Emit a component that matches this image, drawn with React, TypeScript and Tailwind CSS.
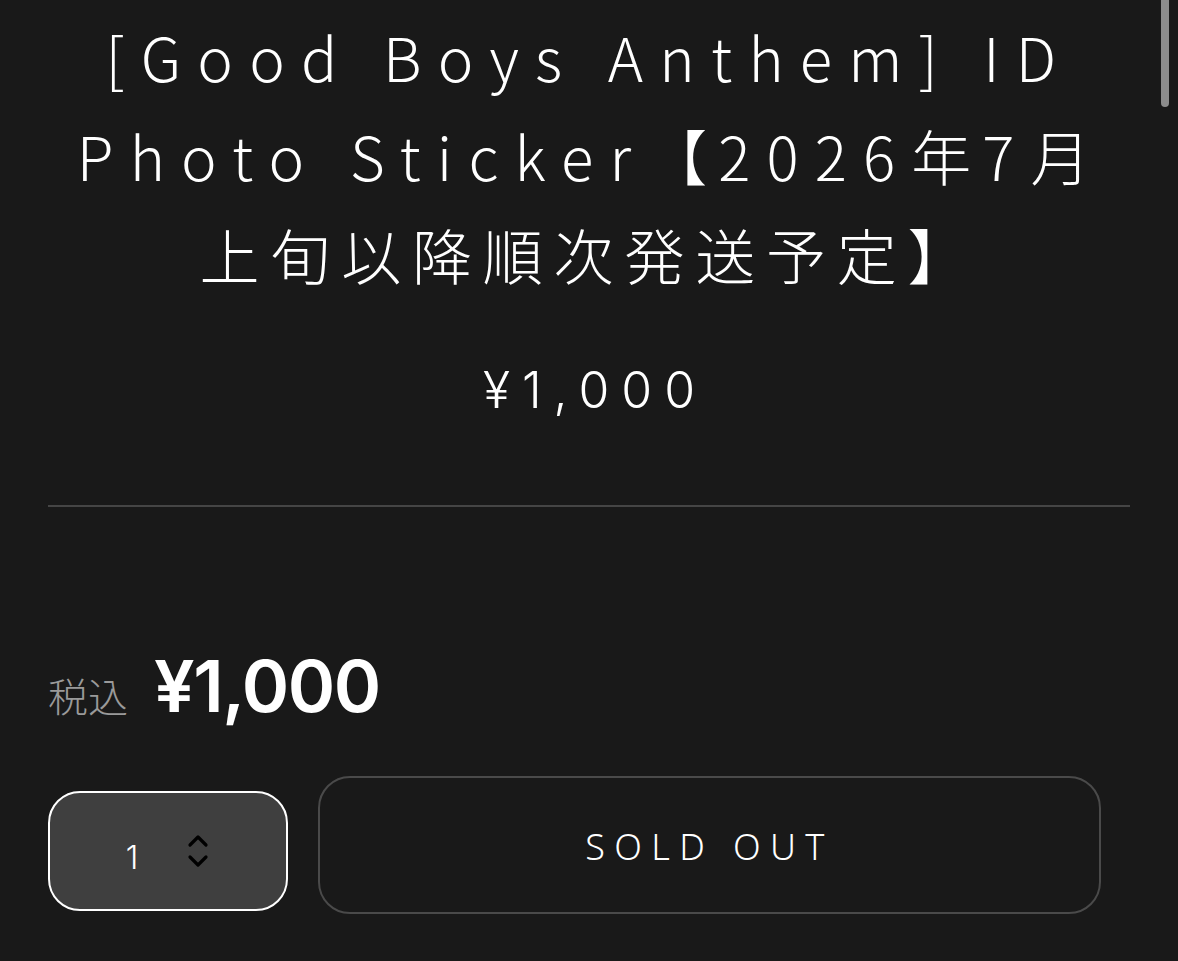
const jp = { fontFamily: '"Noto Sans CJK JP", "Noto Sans", sans-serif' };

// latin runs in the title sit wider than the kana/kanji runs
const title: { text: string; latin: boolean }[][] = [
  [{ text: "[Good Boys Anthem] ID", latin: true }],
  [
    { text: "Photo Sticker", latin: true },
    { text: "【", latin: false },
    { text: "2026", latin: true },
    { text: "年", latin: false },
    { text: "7", latin: true },
    { text: "月", latin: false },
  ],
  [{ text: "上旬以降順次発送予定】", latin: false }],
];

function UpDown() {
  return (
    <svg width="24" height="34" viewBox="0 0 24 34" fill="none" stroke="#000" strokeWidth="3.2" strokeLinecap="round" strokeLinejoin="round">
      <path d="M4 11 L12 3 L20 11" />
      <path d="M4 23 L12 31 L20 23" />
    </svg>
  );
}

export default function App() {
  return (
    <div className="relative min-h-[961px] w-full overflow-hidden bg-[#191919] text-white">
      {/* scroll thumb */}
      <div className="absolute right-[9px] top-0 h-[107px] w-[8px] rounded-b-full bg-[#8c8c8c]" />

      <div className="mx-[48px] pt-[6px]">
        <h1 className="text-center text-[60px] font-light leading-[99px] text-white" style={jp}>
          {title.map((line, i) => (
            <span key={i} className="block whitespace-nowrap">
              {line.map((seg, j) => (
                <span
                  key={j}
                  className={seg.latin ? "tracking-[0.27em]" : "tracking-[0.18em]"}
                >
                  {seg.text}
                </span>
              ))}
            </span>
          ))}
        </h1>

        <p
          className="mt-[62px] pl-[12px] text-center text-[50px] font-light leading-none tracking-[0.24em]"
          style={{ fontFamily: "Inter, sans-serif" }}
        >
          ¥1,000
        </p>

        <div className="mt-[90px] h-[2px] w-full bg-[#454545]" />

        <div className="mt-[143px] flex items-baseline gap-[26px]">
          <span className="text-[40px] font-light text-[#9a9a9a]" style={jp}>
            税込
          </span>
          <span
            className="text-[72px] font-semibold leading-none tracking-[-0.02em]"
            style={{ fontFamily: "Inter, sans-serif" }}
          >
            ¥1,000
          </span>
        </div>

        <div className="mt-[51px] flex items-center gap-[30px]">
          <div className="mt-[12px] flex h-[120px] w-[240px] items-center justify-center gap-[48px] rounded-[32px] border-2 border-white bg-[#3f3f3f]">
            <span
              className="mt-[14px] text-[32px] font-light"
              style={{ fontFamily: "Inter, sans-serif" }}
            >
              1
            </span>
            <UpDown />
          </div>
          <button
            className="flex h-[138px] w-[783px] items-center justify-center rounded-[32px] border-2 border-[#4a4a4a] bg-[#191919] pt-[4px] text-[36px] font-light tracking-[0.26em] text-white"
            style={{ fontFamily: '"Noto Sans", sans-serif' }}
          >
            SOLD OUT
          </button>
        </div>
      </div>
    </div>
  );
}
